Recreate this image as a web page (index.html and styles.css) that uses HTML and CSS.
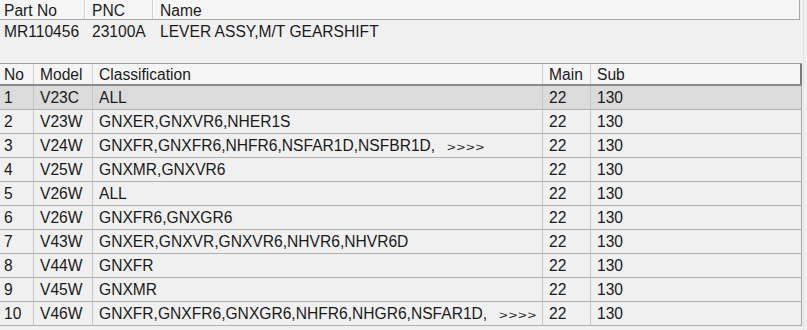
FILE: index.html
```html
<!DOCTYPE html>
<html>
<head>
<meta charset="utf-8">
<link rel="stylesheet" href="styles.css">
</head>
<body>
<div class="page">
  <div class="part">
    <div class="part-head">
      <div class="c c-pn">Part No</div>
      <div class="c c-pnc">PNC</div>
      <div class="c c-name">Name</div>
    </div>
    <div class="part-row">
      <div class="c c-pn">MR110456</div>
      <div class="c c-pnc">23100A</div>
      <div class="c c-name">LEVER ASSY,M/T GEARSHIFT</div>
    </div>
  </div>

  <div class="list">
    <div class="row head">
      <div class="cell">No</div>
      <div class="cell">Model</div>
      <div class="cell">Classification</div>
      <div class="cell">Main</div>
      <div class="cell last">Sub</div>
    </div>
    <div class="row sel">
      <div class="cell">1</div><div class="cell">V23C</div><div class="cell">ALL</div><div class="cell">22</div><div class="cell last">130</div>
    </div>
    <div class="row">
      <div class="cell">2</div><div class="cell">V23W</div><div class="cell">GNXER,GNXVR6,NHER1S</div><div class="cell">22</div><div class="cell last">130</div>
    </div>
    <div class="row">
      <div class="cell">3</div><div class="cell">V24W</div><div class="cell">GNXFR,GNXFR6,NHFR6,NSFAR1D,NSFBR1D,<span class="more">&gt;&gt;&gt;&gt;</span></div><div class="cell">22</div><div class="cell last">130</div>
    </div>
    <div class="row">
      <div class="cell">4</div><div class="cell">V25W</div><div class="cell">GNXMR,GNXVR6</div><div class="cell">22</div><div class="cell last">130</div>
    </div>
    <div class="row">
      <div class="cell">5</div><div class="cell">V26W</div><div class="cell">ALL</div><div class="cell">22</div><div class="cell last">130</div>
    </div>
    <div class="row">
      <div class="cell">6</div><div class="cell">V26W</div><div class="cell">GNXFR6,GNXGR6</div><div class="cell">22</div><div class="cell last">130</div>
    </div>
    <div class="row">
      <div class="cell">7</div><div class="cell">V43W</div><div class="cell">GNXER,GNXVR,GNXVR6,NHVR6,NHVR6D</div><div class="cell">22</div><div class="cell last">130</div>
    </div>
    <div class="row">
      <div class="cell">8</div><div class="cell">V44W</div><div class="cell">GNXFR</div><div class="cell">22</div><div class="cell last">130</div>
    </div>
    <div class="row">
      <div class="cell">9</div><div class="cell">V45W</div><div class="cell">GNXMR</div><div class="cell">22</div><div class="cell last">130</div>
    </div>
    <div class="row">
      <div class="cell">10</div><div class="cell">V46W</div><div class="cell">GNXFR,GNXFR6,GNXGR6,NHFR6,NHGR6,NSFAR1D,<span class="more">&gt;&gt;&gt;&gt;</span></div><div class="cell">22</div><div class="cell last">130</div>
    </div>
  </div>
  <div class="edge"></div>
</div>
</body>
</html>
```

FILE: styles.css
```css
html, body {
  margin: 0;
  padding: 0;
  background: #f0f0f0;
}
body {
  font-family: "Liberation Sans", Arial, sans-serif;
  font-size: 15.6px;
  color: #1a1a1a;
}
.page {
  position: relative;
  width: 807px;
  height: 330px;
  overflow: hidden;
}
.edge {
  position: absolute;
  top: 0;
  right: 3px;
  width: 1px;
  height: 330px;
  background: #e2e2e2;
}
.part {
  width: 800px;
}
.part-head {
  display: flex;
  height: 19px;
  background: #f5f5f5;
  border-bottom: 1px solid #a8a8a8;
  border-right: 1px solid #a8a8a8;
}
.part-row {
  display: flex;
  height: 24px;
}
.c {
  white-space: nowrap;
  box-sizing: border-box;
}
.part-head .c {
  line-height: 22px;
}
.part-row .c {
  line-height: 23px;
}
.c-pn {
  width: 85px;
  padding-left: 4px;
}
.c-pnc {
  width: 68px;
  padding-left: 7px;
}
.c-name {
  flex: 1;
  padding-left: 7px;
}
.part-head .c-pn,
.part-head .c-pnc {
  border-right: 1px solid #d2d2d2;
  box-shadow: 1px 0 0 #ffffff;
}
.list {
  margin-top: 19px;
  width: 802px;
}
.row {
  display: grid;
  grid-template-columns: 34px 59px 450px 48px 211px;
  height: 24px;
  border-bottom: 1px solid #b0b0b0;
  box-sizing: border-box;
}
.row.head {
  height: 23px;
  background: #f5f5f5;
  border-top: 1px solid #a0a0a0;
  border-bottom: 2px solid #8a8a8a;
}
.row.sel {
  background: #dbdbdb;
}
.cell {
  box-sizing: border-box;
  border-right: 1px solid #c6c6c6;
  padding-left: 6px;
  line-height: 23px;
  white-space: nowrap;
  overflow: hidden;
}
.cell:first-child {
  padding-left: 4px;
}
.row.head .cell {
  line-height: 21px;
  border-right: 1px solid #cfcfcf;
}
.row.head .cell.last {
  border-right: 2px solid #7a7a7a;
}
.cell.last {
  border-right: 1px solid #a8a8a8;
}
.more {
  display: inline-block;
  font-size: 11px;
  margin-left: 12px;
  letter-spacing: 0.6px;
  transform: scaleX(1.35);
  transform-origin: left center;
}
```
